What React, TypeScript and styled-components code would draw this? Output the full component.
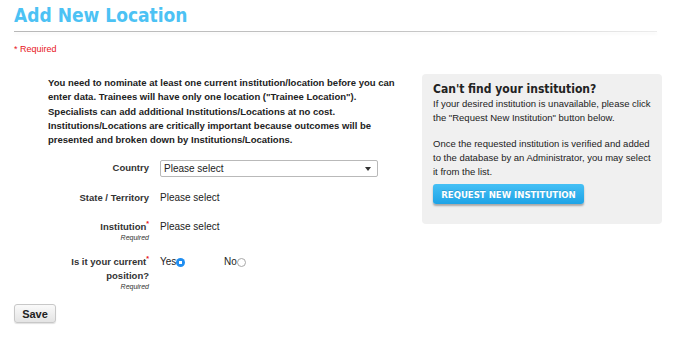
import React, { useState } from "react";
import styled, { createGlobalStyle } from "styled-components";

const GlobalStyle = createGlobalStyle`
  body {
    margin: 0;
    background: #fff;
    font-family: "Liberation Sans", Arial, sans-serif;
    color: #222;
  }
`;

// --- page ---
const Page = styled.div`
  width: 674px;
  height: 343px;
  padding: 0 12px 0 14px;
  box-sizing: border-box;
  overflow: hidden;
`;

const Title = styled.h1`
  margin: 0;
  padding-top: 3px;
  font-family: "DejaVu Sans Condensed", "DejaVu Sans", Verdana, sans-serif;
  font-stretch: condensed;
  font-weight: bold;
  font-size: 19px;
  line-height: 24px;
  color: #4cc2f4;
`;

const Rule = styled.div`
  height: 1px;
  margin-top: 4px;
  width: 643px;
  background: linear-gradient(to right, #b8b8b8 0%, #c4c4c4 60%, #ececec 100%);
  box-shadow: 0 2px 3px rgba(0, 0, 0, 0.06);
`;

const RequiredNote = styled.div`
  margin-top: 12px;
  font-size: 9px;
  color: #e8141b;
`;

const Columns = styled.div`
  display: flex;
  gap: 12px;
  margin-top: 17px;
`;

const LeftCol = styled.div`
  width: 396px;
`;

const Intro = styled.p`
  margin: 5px 0 0 34px;
  font-size: 9.5px;
  font-weight: bold;
  line-height: 14.3px;
  color: #222;
`;

// --- form ---
const FormGrid = styled.div`
  display: grid;
  grid-template-columns: 135px 1fr;
  column-gap: 11px;
  margin-top: 14px;
`;

const Label = styled.div<{ $h: number }>`
  height: ${(p) => p.$h}px;
  text-align: right;
  font-size: 9.5px;
  font-weight: bold;
  line-height: 14px;
  color: #333;

  sup {
    color: #e8141b;
    font-size: 7px;
    line-height: 0;
  }
`;

const SubLabel = styled.div`
  font-size: 7px;
  font-style: italic;
  font-weight: normal;
  line-height: 8px;
  color: #333;
`;

const Value = styled.div`
  font-size: 10px;
  line-height: 14px;
  color: #222;
  display: flex;
  align-items: flex-start;
`;

const SelectBox = styled.div`
  width: 218px;
  height: 17px;
  margin-top: -1px;
  box-sizing: border-box;
  border: 1px solid #b9b9b9;
  border-radius: 2px;
  background: #fff;
  padding: 0 6px 0 3px;
  display: flex;
  align-items: center;
  justify-content: space-between;
  font-size: 10px;
`;

const Caret = styled.span`
  width: 0;
  height: 0;
  border-left: 3px solid transparent;
  border-right: 3px solid transparent;
  border-top: 4px solid #333;
`;

const RadioOption = styled.label`
  display: flex;
  align-items: center;
  width: 64px;
  cursor: pointer;
`;

const Radio = styled.span<{ $on: boolean }>`
  width: 9px;
  height: 9px;
  border-radius: 50%;
  box-sizing: border-box;
  margin-top: 1px;
  border: ${(p) => (p.$on ? "none" : "1px solid #a8a8a8")};
  background: ${(p) =>
    p.$on ? "radial-gradient(circle, #fff 0 1.5px, #1f8ef1 2px)" : "#fff"};
`;

const SaveButton = styled.button`
  margin-top: 11px;
  width: 42px;
  height: 19px;
  padding: 0;
  border: 1px solid #c8c8c8;
  border-radius: 3px;
  background: linear-gradient(#fafafa, #e4e4e4);
  box-shadow: 0 1px 1px rgba(0, 0, 0, 0.12);
  font-family: "Liberation Sans", Arial, sans-serif;
  font-size: 11px;
  font-weight: bold;
  color: #222;
`;

// --- side panel ---
const Panel = styled.div`
  margin-top: 3px;
  width: 240px;
  height: 150px;
  box-sizing: border-box;
  background: #f0f0f0;
  border-radius: 4px;
  padding: 7px 10px 0 11px;
`;

const PanelTitle = styled.h2`
  margin: 0;
  font-family: "DejaVu Sans Condensed", "DejaVu Sans", Verdana, sans-serif;
  font-stretch: condensed;
  font-size: 12px;
  font-weight: bold;
  line-height: 16px;
  color: #222;
`;

const PanelText = styled.p`
  margin: 0 0 12px;
  font-size: 9.5px;
  line-height: 14px;
  color: #222;
`;

const RequestButton = styled.button`
  display: block;
  margin-top: -7px;
  width: 151px;
  height: 20px;
  padding: 0;
  border: none;
  border-radius: 3px;
  background: linear-gradient(#45c0f5, #1ea3e6);
  box-shadow: 0 2px 2px rgba(0, 0, 0, 0.3);
  font-family: "DejaVu Sans Condensed", "DejaVu Sans", Verdana, sans-serif;
  font-stretch: condensed;
  font-size: 9.5px;
  font-weight: bold;
  color: #fff;
  text-shadow: 0 -1px 0 rgba(0, 0, 0, 0.15);
`;

export default function App() {
  const [current, setCurrent] = useState(true);

  return (
    <Page>
      <GlobalStyle />
      <Title>Add New Location</Title>
      <Rule />
      <RequiredNote>* Required</RequiredNote>

      <Columns>
        <LeftCol>
          <Intro>
            You need to nominate at least one current institution/location before you can
            <br />
            enter data. Trainees will have only one location ("Trainee Location").
            <br />
            Specialists can add additional Institutions/Locations at no cost.
            <br />
            Institutions/Locations are critically important because outcomes will be
            <br />
            presented and broken down by Institutions/Locations.
          </Intro>

          <FormGrid>
            <Label $h={30}>Country</Label>
            <Value>
              <SelectBox>
                Please select
                <Caret />
              </SelectBox>
            </Value>

            <Label $h={29}>State / Territory</Label>
            <Value>Please select</Value>

            <Label $h={35}>
              Institution<sup>*</sup>
              <SubLabel>Required</SubLabel>
            </Label>
            <Value>Please select</Value>

            <Label $h={38}>
              Is it your current<sup>*</sup>
              <br />
              position?
              <SubLabel>Required</SubLabel>
            </Label>
            <Value>
              <RadioOption onClick={() => setCurrent(true)}>
                Yes
                <Radio $on={current} />
              </RadioOption>
              <RadioOption onClick={() => setCurrent(false)}>
                No
                <Radio $on={!current} />
              </RadioOption>
            </Value>
          </FormGrid>

          <SaveButton type="button">Save</SaveButton>
        </LeftCol>

        <Panel>
          <PanelTitle>Can't find your institution?</PanelTitle>
          <PanelText>
            If your desired institution is unavailable, please click
            <br />
            the "Request New Institution" button below.
          </PanelText>
          <PanelText>
            Once the requested institution is verified and added
            <br />
            to the database by an Administrator, you may select
            <br />
            it from the list.
          </PanelText>
          <RequestButton type="button">REQUEST NEW INSTITUTION</RequestButton>
        </Panel>
      </Columns>
    </Page>
  );
}
